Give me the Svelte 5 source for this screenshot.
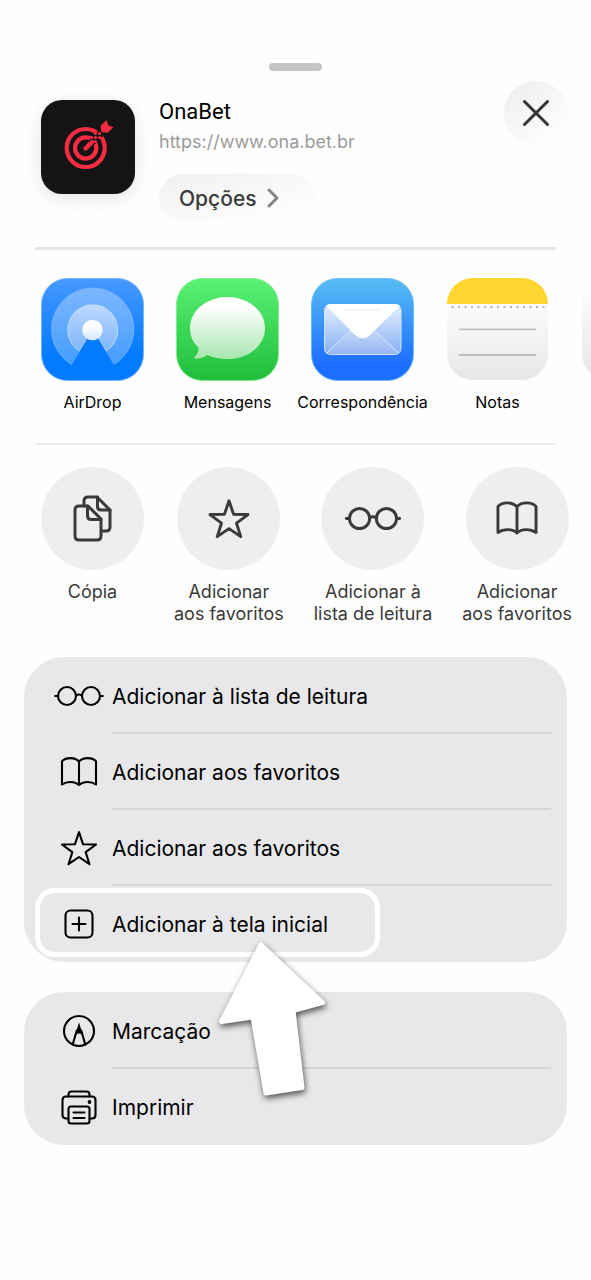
<script>
  const apps = [
    { id: 'airdrop', label: 'AirDrop' },
    { id: 'messages', label: 'Mensagens' },
    { id: 'mail', label: 'Correspondência' },
    { id: 'notes', label: 'Notas' },
    { id: 'more', label: '' }
  ];
  const actions = [
    { icon: 'copy', lines: ['Cópia'] },
    { icon: 'star', lines: ['Adicionar', 'aos favoritos'] },
    { icon: 'glasses', lines: ['Adicionar à', 'lista de leitura'] },
    { icon: 'book', lines: ['Adicionar', 'aos favoritos'] }
  ];
  const groups = [
    [
      { icon: 'glasses', label: 'Adicionar à lista de leitura' },
      { icon: 'book', label: 'Adicionar aos favoritos' },
      { icon: 'star', label: 'Adicionar aos favoritos' },
      { icon: 'plus', label: 'Adicionar à tela inicial', highlighted: true }
    ],
    [
      { icon: 'markup', label: 'Marcação' },
      { icon: 'print', label: 'Imprimir' }
    ]
  ];
</script>

{#snippet glyph(name)}
  <svg class="glyph" viewBox="0 0 50 40" aria-hidden="true">
    {#if name === 'glasses'}
      <circle cx="13" cy="20" r="9" />
      <circle cx="37" cy="20" r="9" />
      <path d="M22 19.3q3-1.6 6 0M1.2 20H4M46 20h2.8" />
    {:else if name === 'book'}
      <path d="M25 9.5C21 5 12 5 8 9.200V32.500C13 29 21 29 25 33C29 29 37 29 42 32.500V9.200C38 5 29 5 25 9.500V33" />
    {:else if name === 'star'}
      <path d="M25 4.200L29.100 16.300L42 16.500L31.700 24.200L35.500 36.200L25 29L14.500 36.200L18.300 24.200L8 16.500L20.900 16.300Z" />
    {:else if name === 'plus'}
      <rect x="11.500" y="6.500" width="27" height="27" rx="5" />
      <path d="M25 13.500v13M18.500 20h13" />
    {:else if name === 'markup'}
      <circle cx="25" cy="20" r="15" />
      <path d="M18.700 33.500L22.800 19.500M31.300 33.500L27.200 19.500" />
      <path class="tip" d="M25 11.500L28.700 23.500Q25 21.500 21.300 23.500Z" />
    {:else if name === 'print'}
      <path d="M14.500 9.500V7.500Q14.500 4.500 17.500 4.500H32.500Q35.500 4.500 35.500 7.500V9.500" />
      <path d="M14.500 31.500H12Q8.500 31.500 8.500 28V13Q8.500 9.500 12 9.500H38Q41.500 9.500 41.500 13V28Q41.500 31.500 38 31.500H35.500" />
      <rect x="14.500" y="19.500" width="21" height="17" rx="2.500" />
      <path d="M19.500 25.500h11M19.500 31h11" />
      <circle class="tip" cx="35.500" cy="15" r="1.900" />
    {/if}
  </svg>
{/snippet}

<main class="sheet">
  <div class="grabber"></div>

  <header class="header">
    <svg class="logo" viewBox="0 0 94 94" aria-hidden="true">
      <rect width="94" height="94" rx="21" fill="#141414" />
      <g fill="none" stroke="#fa2c42" stroke-width="4.200">
        <circle cx="44.700" cy="48" r="19" />
        <circle cx="44.700" cy="48" r="10.600" />
      </g>
      <path d="M47 46L60 33" stroke="#141414" stroke-width="7" />
      <path d="M44.500 48.500L51 42" stroke="#fa2c42" stroke-width="4.400" stroke-linecap="round" />
      <g fill="#fa2c42">
        <circle cx="54.500" cy="33.500" r="1.600" />
        <circle cx="58.500" cy="33.500" r="1.600" />
        <circle cx="50.500" cy="37.500" r="1.600" />
        <circle cx="54.500" cy="37.500" r="1.600" />
        <circle cx="58.500" cy="37.500" r="1.600" />
        <circle cx="54.500" cy="41.500" r="1.600" />
        <path d="M65.700 20L67.200 25.500L72.500 27L66.700 32.700L61.500 32.200L60 30.700L59.700 25.700Z" />
      </g>
    </svg>
    <div class="site">
      <h1>OnaBet</h1>
      <a class="url" href="https://www.ona.bet.br">https://www.ona.bet.br</a>
      <button class="options">
        Opções
        <svg viewBox="0 0 12 20" aria-hidden="true"><path d="M2 2l8 8-8 8" /></svg>
      </button>
    </div>
    <button class="close" aria-label="Fechar">
      <svg viewBox="0 0 26 26" aria-hidden="true"><path d="M1.500 1.500l23 23M24.500 1.500l-23 23" /></svg>
    </button>
  </header>

  <section class="apps">
    {#each apps as app}
      <button class="app" aria-label={app.label ? undefined : 'Mais'}>
        <svg class="app-icon" viewBox="0 0 103 103" aria-hidden="true">
          {#if app.id === 'airdrop'}
            <defs>
              <linearGradient id="air" x2="0" y2="1"><stop stop-color="#4799ff" /><stop offset=".75" stop-color="#037bff" /></linearGradient>
              <linearGradient id="airRing" x2="0" y2="1"><stop stop-color="#7db7ff" /><stop offset="1" stop-color="#439cff" /></linearGradient>
              <linearGradient id="airInner" x2="0" y2="1"><stop stop-color="#bed9ff" /><stop offset="1" stop-color="#7cb5fc" /></linearGradient>
              <linearGradient id="airDot" x2="0" y2="1"><stop offset=".3" stop-color="#fff" /><stop offset="1" stop-color="#d4e6ff" /></linearGradient>
            </defs>
            <rect x=".5" y=".5" width="102" height="102" rx="26" fill="url(#air)" stroke="#73b5ff" />
            <path d="M31 86.500A41 41 0 1 1 72.500 86.500L51.500 51Z" fill="url(#airRing)" stroke="#85bcff" stroke-width=".8" />
            <path d="M38.500 73A25 25 0 1 1 65 73L51.500 51Z" fill="url(#airInner)" stroke="#d0e4ff" stroke-width=".8" />
            <path d="M46.500 60L30.500 87H73L57 60Z" fill="#057cff" />
            <circle cx="51.500" cy="52" r="10.300" fill="url(#airDot)" />
          {:else if app.id === 'messages'}
            <defs>
              <linearGradient id="msg" x2="0" y2="1"><stop stop-color="#5af175" /><stop offset="1" stop-color="#20bd3b" /></linearGradient>
              <linearGradient id="bubble" x2="0" y2="1"><stop offset=".15" stop-color="#fff" /><stop offset="1" stop-color="#a7e7ae" /></linearGradient>
            </defs>
            <rect x=".5" y=".5" width="102" height="102" rx="26" fill="url(#msg)" stroke="#7fee92" />
            <path d="M51.500 19C31 19 14 32.500 14 50C14 59 17.500 65 22.500 69.500C23 74 21 77.500 18 79.500C18 81.500 25 81 31.500 77C37 79.500 44 81 51.500 81C72 81 89 68 89 50C89 32.500 72 19 51.500 19Z" fill="url(#bubble)" />
          {:else if app.id === 'mail'}
            <defs>
              <linearGradient id="mail" x2="0" y2="1"><stop stop-color="#59bdf2" /><stop offset=".85" stop-color="#1b6eff" /></linearGradient>
              <linearGradient id="paper" x2="0" y2="1"><stop stop-color="#e5efff" /><stop offset="1" stop-color="#86b0f4" /></linearGradient>
              <linearGradient id="fold" x2="0" y2="1"><stop stop-color="#d3e1fb" /><stop offset="1" stop-color="#93b6f3" /></linearGradient>
            </defs>
            <rect x=".5" y=".5" width="102" height="102" rx="26" fill="url(#mail)" stroke="#6cbcfb" />
            <rect x="13.500" y="26.500" width="76.500" height="50" rx="6" fill="url(#paper)" stroke="#d4e4ff" />
            <path d="M16 75L45 47H58L88 75Q87 76 84 76H19Q17 76 16 75Z" fill="url(#fold)" />
            <path d="M15.500 75.500L42 50M88 75.500L61 50" stroke="#d9e7ff" />
            <path d="M15 27.500Q17 26 20 26H84Q87 26 89 27.500L60 56Q52 64.500 43 56Z" fill="#fff" />
            <path d="M33 32h37" stroke="#eff4fb" stroke-width="1.500" />
          {:else if app.id === 'notes'}
            <defs>
              <linearGradient id="note" x2="0" y2="1"><stop offset=".3" stop-color="#fbfbfb" /><stop offset="1" stop-color="#e6e6e6" /></linearGradient>
            </defs>
            <rect x="1" y="1" width="101" height="101" rx="26" fill="url(#note)" />
            <path d="M1 26A26 26 0 0 1 27 0H76A26 26 0 0 1 102 26Z" fill="#ffd530" />
            <path d="M5.500 29h94" stroke="#b9b6ad" stroke-width="2" stroke-dasharray="2 4.500" />
            <path d="M13 51.300h77M13 77h77" stroke="#bebebe" stroke-width="1.800" />
          {:else}
            <defs>
              <linearGradient id="next" x2="0" y2="1"><stop offset=".1" stop-color="#fcfcfc" /><stop offset="1" stop-color="#e6e6e6" /></linearGradient>
            </defs>
            <rect x="1" y="1" width="101" height="101" rx="26" fill="url(#next)" />
          {/if}
        </svg>
        <span>{app.label}</span>
      </button>
    {/each}
  </section>

  <section class="actions">
    {#each actions as action}
      <button class="action">
        <span class="disc">
          {#if action.icon === 'copy'}
            <svg class="copy" viewBox="0 0 40 48" aria-hidden="true">
              <path d="M11 11V6Q11 2 15 2H24L37 15V32Q37 36 33 36H29" />
              <path d="M24.500 2V11.500Q24.500 15 28 15H37" />
              <path d="M6 11H15L28 24V41Q28 45 24 45H6Q2 45 2 41V15Q2 11 6 11Z" />
              <path d="M14.500 11V20.500Q14.500 24.500 18 24.500H28" />
            </svg>
          {:else}
            {@render glyph(action.icon)}
          {/if}
        </span>
        <span class="caption">
          {#each action.lines as line}<span>{line}</span>{/each}
        </span>
      </button>
    {/each}
  </section>

  {#each groups as group}
    <ul class="group">
      {#each group as item}
        <li>
          <button class="row">
            {@render glyph(item.icon)}
            <span class="row-label">{item.label}</span>
          </button>
          {#if item.highlighted}
            <span class="ring"></span>
            <svg class="pointer" viewBox="0 0 124 170" aria-hidden="true">
              <path d="M50 9L111.500 66.500L82 74.500L91 151.500L55 157L42 81L10.500 85.500Z" />
            </svg>
          {/if}
        </li>
      {/each}
    </ul>
  {/each}
</main>

<style>
  :global(body) {
    margin: 0;
    background: #fefefe;
  }
  .sheet {
    display: flex;
    flex-direction: column;
    padding: 63px 24px 106px;
    overflow: hidden;
    font-family: Inter, "Liberation Sans", sans-serif;
    color: #000;
  }
  button {
    padding: 0;
    border: 0;
    background: none;
    font: inherit;
    color: inherit;
    cursor: pointer;
  }
  svg {
    display: block;
    overflow: visible;
  }
  .grabber {
    align-self: center;
    width: 53px;
    height: 8px;
    border-radius: 4px;
    background: #c5c5c7;
  }
  .header {
    display: flex;
    align-items: flex-start;
    gap: 24px;
    margin: 0 11px;
    padding: 10px 0 24px 6px;
    border-bottom: 3px solid #e6e6e6;
  }
  .logo {
    width: 94px;
    height: 94px;
    margin-top: 19px;
    border-radius: 21px;
    box-shadow: 0 4px 18px rgb(0 0 0 / 10%);
  }
  .site {
    display: flex;
    flex: 1;
    flex-direction: column;
    align-items: flex-start;
    padding-top: 17px;
  }
  h1 {
    margin: 0;
    font: 400 22px/28px Roboto, sans-serif;
  }
  .url {
    font-size: 18px;
    line-height: 32px;
    color: #9b9b9b;
    text-decoration: none;
  }
  .options {
    display: flex;
    align-items: center;
    gap: 10px;
    height: 48px;
    margin-top: 16px;
    margin-bottom: 1px;
    padding: 0 36px 0 20px;
    border-radius: 25px;
    background: linear-gradient(165deg, #f0f0f0, #fefefe 85%);
    font-size: 21px;
    font-weight: 500;
    color: #3a3a3a;
  }
  .options svg {
    width: 12px;
    height: 20px;
    fill: none;
    stroke: #858585;
    stroke-width: 3;
    stroke-linecap: round;
    stroke-linejoin: round;
  }
  .close {
    display: grid;
    place-items: center;
    width: 64px;
    height: 64px;
    margin-right: -12px;
    border-radius: 50%;
    background: linear-gradient(145deg, #ededed, #fefefe 85%);
  }
  .close svg {
    width: 26px;
    height: 26px;
    stroke: #333;
    stroke-width: 3;
    stroke-linecap: round;
  }
  .apps {
    display: flex;
    gap: 32px;
    margin: 0 11px;
    padding: 28px 0 30px 6px;
    border-bottom: 2px solid #ebebeb;
  }
  .app {
    display: flex;
    flex: none;
    flex-direction: column;
    align-items: center;
    gap: 10px;
    width: 103px;
    font-size: 16px;
    line-height: 22px;
    white-space: nowrap;
  }
  .app-icon {
    width: 103px;
    height: 103px;
  }
  .actions {
    display: flex;
    gap: 30px;
    padding: 22px 0 32px 17px;
  }
  .action {
    display: flex;
    flex: none;
    flex-direction: column;
    align-items: center;
    gap: 11px;
    font-size: 18px;
    line-height: 22px;
    color: #3a3a3a;
  }
  .disc {
    display: grid;
    place-items: center;
    width: 103px;
    height: 103px;
    border-radius: 50%;
    background: #eee;
  }
  .caption {
    display: flex;
    flex-direction: column;
    white-space: nowrap;
  }
  .glyph,
  .copy {
    fill: none;
    stroke: currentColor;
    stroke-width: 2.1;
    stroke-linecap: round;
    stroke-linejoin: round;
  }
  .glyph {
    width: 50px;
    height: 40px;
  }
  .copy {
    width: 40px;
    height: 48px;
    stroke-width: 3;
  }
  .disc .glyph {
    width: 56px;
    height: 45px;
    stroke-width: 2.6;
  }
  .tip {
    fill: currentColor;
    stroke: none;
  }
  .group {
    display: flex;
    flex-direction: column;
    margin: 0 0 30px;
    padding: 1px 0 0;
    border-radius: 40px;
    background: #e8e8ea;
    list-style: none;
  }
  .group li {
    position: relative;
  }
  .row {
    display: flex;
    align-items: center;
    gap: 8px;
    width: 100%;
    height: 76px;
    padding: 0 16px 0 30px;
  }
  .row-label {
    display: flex;
    flex: 1;
    align-items: center;
    align-self: stretch;
    font-size: 21px;
    text-align: left;
  }
  .group li:not(:last-child) .row-label {
    box-shadow: inset 0 -2px #d5d5d7;
  }
  .ring {
    position: absolute;
    top: 2px;
    left: 11px;
    box-sizing: border-box;
    width: 345px;
    height: 69px;
    border: 5px solid #fff;
    border-radius: 20px;
    pointer-events: none;
  }
  .pointer {
    position: absolute;
    z-index: 1;
    top: 50px;
    left: 187px;
    width: 124px;
    height: 170px;
    fill: #fff;
    stroke: #fff;
    stroke-width: 5;
    stroke-linejoin: round;
    filter: drop-shadow(1px 3px 3px rgb(0 0 0 / 65%));
    pointer-events: none;
  }
</style>
